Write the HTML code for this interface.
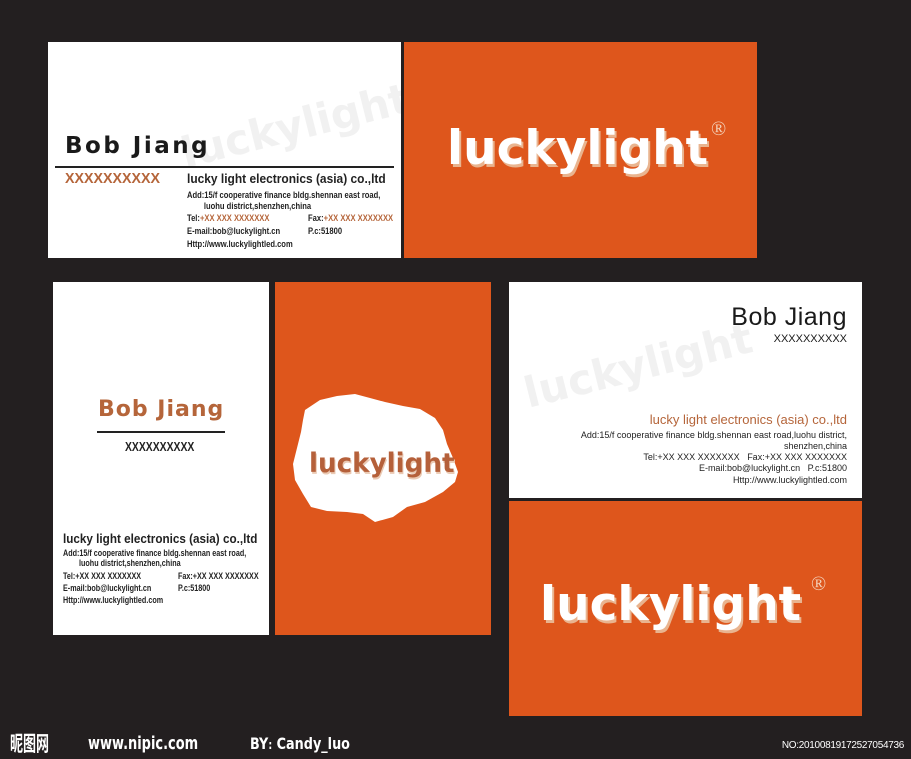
<!DOCTYPE html>
<html><head><meta charset="utf-8"><style>
*{margin:0;padding:0;box-sizing:border-box}
body{width:911px;height:759px;background:#231f20;position:relative;overflow:hidden;font-family:"Liberation Sans",sans-serif}
.c{position:absolute}
.w{background:#fff}
.o{background:#de561c}
.t{position:absolute;white-space:nowrap}
.nar{font-family:"Liberation Sans",sans-serif;font-weight:bold;transform-origin:0 0;transform:scaleX(.8)}
.logo{font-family:"DejaVu Sans",sans-serif;font-weight:bold;color:#fff;text-shadow:2px 3px 0 #e9b48f;transform-origin:0 0}
.wm{font-family:"DejaVu Sans",sans-serif;font-weight:bold;color:#f1f1f1;transform-origin:0 0}
</style></head><body>

<!-- card 1 -->
<div class="c w" style="left:48px;top:42px;width:353px;height:216px;overflow:hidden">
  <div class="t wm" style="left:128px;top:88px;font-size:42px;transform:rotate(-14deg)">luckylight</div>
  <div class="t" style="left:17px;top:91px;font-family:'DejaVu Sans',sans-serif;font-weight:bold;font-size:23px;color:#1a1a1a;letter-spacing:2.5px">Bob Jiang</div>
  <div style="position:absolute;left:7px;top:124px;width:339px;height:2px;background:#222"></div>
  <div class="t nar" style="left:17px;top:128px;font-size:15px;color:#b5653a;transform:scaleX(.95)">XXXXXXXXXX</div>
  <div class="t nar" style="left:139px;top:129px;font-size:13px;color:#222;transform:scaleX(.92)">lucky light electronics (asia) co.,ltd</div>
  <div class="t nar" style="left:139px;top:148px;font-size:9.5px;color:#222;line-height:11px">Add:15/f cooperative finance bldg.shennan east road,<br>&nbsp;&nbsp;&nbsp;&nbsp;&nbsp;&nbsp;&nbsp;&nbsp;luohu district,shenzhen,china</div>
  <div class="t nar" style="left:139px;top:171px;font-size:9.5px;color:#222">Tel:<span style="color:#b5653a">+XX XXX XXXXXXX</span></div>
  <div class="t nar" style="left:260px;top:171px;font-size:9.5px;color:#222">Fax:<span style="color:#b5653a">+XX XXX XXXXXXX</span></div>
  <div class="t nar" style="left:139px;top:184px;font-size:9.5px;color:#222">E-mail:bob@luckylight.cn</div>
  <div class="t nar" style="left:260px;top:184px;font-size:9.5px;color:#222">P.c:51800</div>
  <div class="t nar" style="left:139px;top:197px;font-size:9.5px;color:#222">Http://www.luckylightled.com</div>
</div>
<div class="c o" style="left:404px;top:42px;width:353px;height:216px">
  <div class="t logo" style="left:43px;top:79px;font-size:47px">luckylight</div>
  <div class="t" style="left:307px;top:76px;font-size:20px;color:#f3d0b8;font-family:'Liberation Serif',serif">®</div>
</div>

<!-- card 2 -->
<div class="c w" style="left:53px;top:282px;width:216px;height:353px">
  <div class="t" style="left:45px;top:115px;font-family:'DejaVu Sans',sans-serif;font-weight:bold;font-size:22px;color:#b5653a;letter-spacing:1px">Bob Jiang</div>
  <div style="position:absolute;left:44px;top:149px;width:128px;height:2px;background:#222"></div>
  <div class="t nar" style="left:72px;top:157px;font-size:13px;color:#222">XXXXXXXXXX</div>
  <div class="t nar" style="left:10px;top:249px;font-size:13px;color:#222;transform:scaleX(.9)">lucky light electronics (asia) co.,ltd</div>
  <div class="t nar" style="left:10px;top:266px;font-size:9px;color:#222;line-height:10px">Add:15/f cooperative finance bldg.shennan east road,<br>&nbsp;&nbsp;&nbsp;&nbsp;&nbsp;&nbsp;&nbsp;&nbsp;luohu district,shenzhen,china</div>
  <div class="t nar" style="left:10px;top:289px;font-size:9px;color:#222">Tel:+XX XXX XXXXXXX</div>
  <div class="t nar" style="left:125px;top:289px;font-size:9px;color:#222">Fax:+XX XXX XXXXXXX</div>
  <div class="t nar" style="left:10px;top:301px;font-size:9px;color:#222">E-mail:bob@luckylight.cn</div>
  <div class="t nar" style="left:125px;top:301px;font-size:9px;color:#222">P.c:51800</div>
  <div class="t nar" style="left:10px;top:313px;font-size:9px;color:#222">Http://www.luckylightled.com</div>
</div>
<div class="c o" style="left:275px;top:282px;width:216px;height:353px">
  <svg style="position:absolute;left:0;top:0" width="216" height="353">
    <path d="M30 128 L45 118 L62 114 L80 112 L95 116 L110 120 L128 124 L145 127 L160 136 L168 148 L172 162 L178 176 L183 190 L180 200 L168 210 L150 220 L132 225 L118 235 L100 240 L88 232 L72 230 L52 229 L36 225 L28 212 L20 198 L18 182 L22 166 L26 150 L28 138 Z" fill="#fff"/>
  </svg>
  <div class="t" style="left:34px;top:166px;font-family:'DejaVu Sans',sans-serif;font-weight:bold;font-size:27px;color:#b5603a;text-shadow:1px 2px 0 #eac9b3;transform:scaleX(.97);transform-origin:0 0">luckylight</div>
</div>

<!-- card 3 -->
<div class="c w" style="left:509px;top:282px;width:353px;height:216px;overflow:hidden">
  <div class="t wm" style="left:10px;top:88px;font-size:42px;transform:rotate(-14deg)">luckylight</div>
  <div class="t" style="right:15px;top:21px;font-size:25px;color:#1a1a1a;letter-spacing:.5px">Bob Jiang</div>
  <div class="t" style="right:15px;top:51px;font-size:11px;color:#1a1a1a">XXXXXXXXXX</div>
  <div class="t" style="right:15px;top:130px;font-size:13px;color:#b5653a">lucky light electronics (asia) co.,ltd</div>
  <div class="t" style="right:15px;top:148px;font-size:9px;color:#222;text-align:right;line-height:11px">Add:15/f cooperative finance bldg.shennan east road,luohu district,<br>shenzhen,china</div>
  <div class="t" style="right:15px;top:170px;font-size:9px;color:#222">Tel:+XX XXX XXXXXXX&nbsp;&nbsp;&nbsp;Fax:+XX XXX XXXXXXX</div>
  <div class="t" style="right:15px;top:181px;font-size:9px;color:#222">E-mail:bob@luckylight.cn&nbsp;&nbsp;&nbsp;P.c:51800</div>
  <div class="t" style="right:15px;top:193px;font-size:9px;color:#222">Http://www.luckylightled.com</div>
</div>
<div class="c o" style="left:509px;top:501px;width:353px;height:215px">
  <div class="t logo" style="left:31px;top:76px;font-size:47px">luckylight</div>
  <div class="t" style="left:302px;top:72px;font-size:20px;color:#f3d0b8;font-family:'Liberation Serif',serif">®</div>
</div>

<!-- footer -->
<div class="t" style="left:10px;top:731px;font-family:'Noto Sans CJK SC',sans-serif;font-weight:bold;font-size:21px;color:#fff;transform:scaleX(.62);transform-origin:0 0;line-height:24px">昵图网</div>
<div class="t" style="left:88px;top:733px;font-family:'DejaVu Sans',sans-serif;font-weight:bold;font-size:18px;color:#fff;transform:scaleX(.72);transform-origin:0 0;line-height:22px">www.nipic.com</div>
<div class="t" style="left:250px;top:734px;font-family:'DejaVu Sans',sans-serif;font-weight:bold;font-size:16px;color:#fff;line-height:20px;transform:scaleX(.8);transform-origin:0 0">BY<span style="font-size:12px">:</span> Candy_luo</div>
<div class="t" style="right:7px;top:740px;font-size:10px;color:#fff;letter-spacing:-.3px">NO:20100819172527054736</div>
</body></html>
